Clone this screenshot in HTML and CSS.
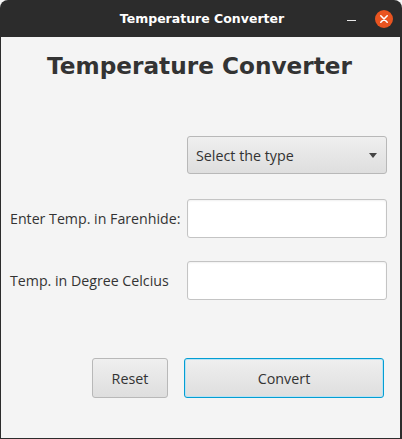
FILE: index.html
```html
<!DOCTYPE html>
<html>
<head>
<meta charset="utf-8">
<link rel="stylesheet" href="styles.css">
</head>
<body>
<div class="window">
  <div class="titlebar">
    <span class="title">Temperature Converter</span>
    <div class="controls">
      <span class="min"></span>
      <span class="close">
        <svg width="18" height="18" viewBox="0 0 18 18"><circle cx="9" cy="9" r="9" fill="#e95420"/><path d="M5.8 5.8 L12.2 12.2 M12.2 5.8 L5.8 12.2" stroke="#fff" stroke-width="1.6" stroke-linecap="round"/></svg>
      </span>
    </div>
  </div>
  <div class="content">
    <h1 class="heading">Temperature Converter</h1>
    <div class="form">
      <div class="spacer"></div>
      <div class="combo"><span>Select the type</span><span class="arrow"></span></div>
      <div class="label">Enter Temp. in Farenhide:</div>
      <div class="field"></div>
      <div class="label">Temp. in Degree Celcius</div>
      <div class="field"></div>
    </div>
    <div class="buttons">
      <div class="btn reset">Reset</div>
      <div class="btn convert">Convert</div>
    </div>
  </div>
</div>
</body>
</html>
```
FILE: styles.css
```css
html, body {
  margin: 0;
  padding: 0;
  background: #f6f6f6;
}
.window {
  width: 402px;
  height: 439px;
  display: flex;
  flex-direction: column;
  box-sizing: border-box;
}
.titlebar {
  height: 37px;
  flex: none;
  background: #2c2c2c;
  border-radius: 8px 8px 0 0;
  position: relative;
  display: flex;
  align-items: center;
  justify-content: center;
}
.title {
  color: #ffffff;
  font-family: "DejaVu Sans", sans-serif;
  font-weight: bold;
  font-size: 12.5px;
  margin-left: 2px;
}
.controls {
  position: absolute;
  right: 9px;
  top: 10px;
  display: flex;
  align-items: center;
  gap: 19px;
}
.min {
  display: block;
  width: 9px;
  height: 1px;
  background: #e8e8e8;
  margin-top: 3px;
}
.close {
  display: block;
  width: 18px;
  height: 18px;
}
.close svg { display: block; }
.content {
  flex: 1;
  background: #f4f4f4;
  border-left: 1px solid #2c2c2c;
  border-right: 2px solid #2c2c2c;
  border-bottom: 1px solid #2c2c2c;
  display: flex;
  flex-direction: column;
  font-family: "Open Sans", sans-serif;
  color: #333333;
}
.heading {
  margin: 13px 0 0 0;
  font-family: "DejaVu Sans", sans-serif;
  font-weight: bold;
  font-size: 23.2px;
  line-height: 32px;
  text-align: center;
  color: #333333;
  padding-right: 2px;
}
.form {
  margin-top: 54px;
  display: grid;
  grid-template-columns: 177px 200px;
  grid-template-rows: 40px 39px 39px;
  row-gap: 23px;
  padding-left: 9px;
}
.label {
  display: flex;
  align-items: center;
  font-size: 14.2px;
  color: #333;
}
.combo {
  height: 38px;
  box-sizing: border-box;
  border: 1px solid #b8b8b8;
  border-radius: 3px;
  background: linear-gradient(#efefef, #dedede);
  display: flex;
  align-items: center;
  justify-content: space-between;
  padding: 0 9px 0 8px;
  font-size: 14.3px;
  color: #333;
}
.arrow {
  width: 0;
  height: 0;
  border-left: 4px solid transparent;
  border-right: 4px solid transparent;
  border-top: 5px solid #444;
}
.field {
  box-sizing: border-box;
  border: 1px solid #c4c4c4;
  border-radius: 3px;
  background: #ffffff;
  box-shadow: inset 0 1px 2px rgba(0,0,0,0.06);
}
.buttons {
  margin-top: 58px;
  display: flex;
  padding-left: 91px;
  gap: 16px;
}
.btn {
  box-sizing: border-box;
  height: 40px;
  border: 1px solid #b8b8b8;
  border-radius: 3px;
  background: linear-gradient(#efefef, #dedede);
  display: flex;
  align-items: center;
  justify-content: center;
  font-size: 14.3px;
  color: #333;
}
.reset { width: 76px; }
.convert {
  width: 200px;
  border: 1px solid #039ed3;
  box-shadow: inset 0 0 0 1px #b8e2f4;
}
```
